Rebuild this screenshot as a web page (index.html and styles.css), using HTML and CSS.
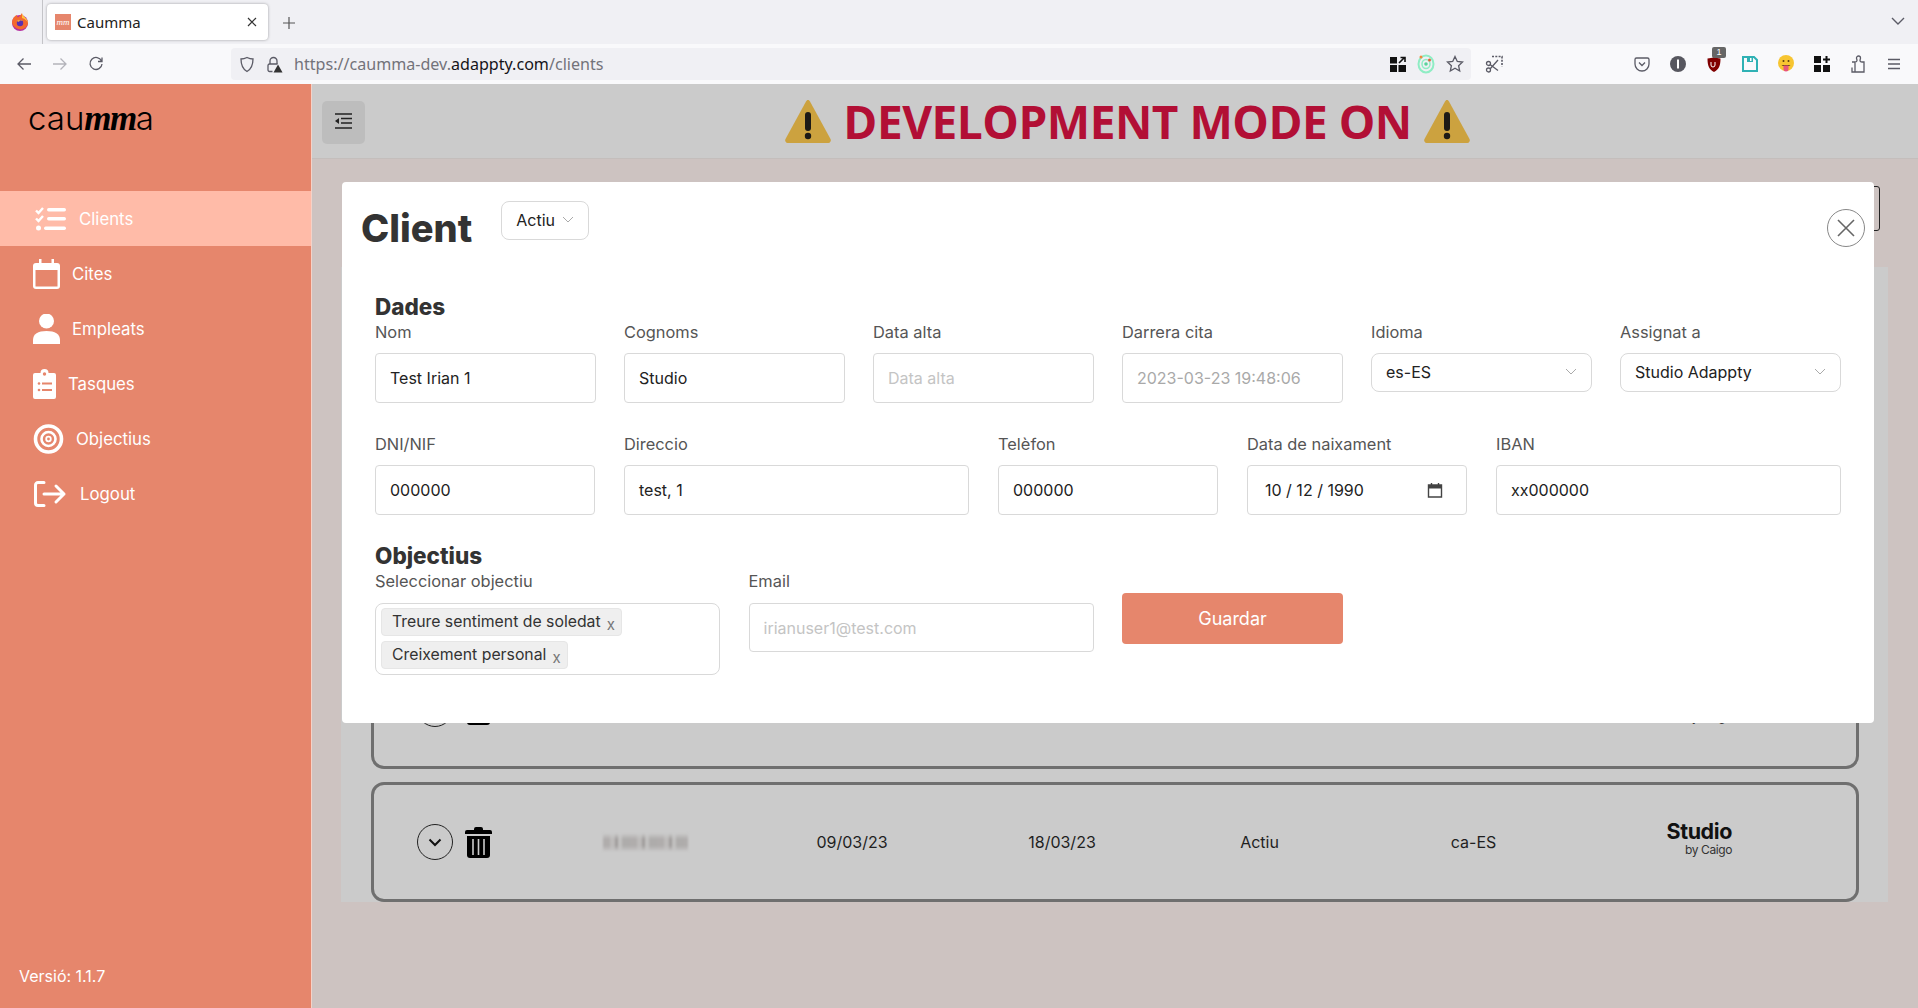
FILE: index.html
```html
<!DOCTYPE html>
<html lang="ca">
	<head>
		<meta charset="utf-8" />
		<title>Caumma</title>
		<link rel="stylesheet" href="styles.css">
	</head>
	<body>
		<!-- browser chrome -->
		<div class="tabbar">
			<div class="ff-slot">
				<svg width="18" height="18" viewBox="0 0 18 18"><circle cx="9" cy="10" r="8" fill="#b52fa0"/><path d="M1 9C1.500 5 4 2.500 6 2c0 1 .5 2 1 2.500C8.500 3.500 10 1.500 11 0c0 2 1 2.500 3 4.500 2 2 3 4 3 5.500 0 3-3 6-7 6.500C5 16 1 13 1 9z" fill="#f4692e"/><path d="M11 0c0 2 1 2.500 3 4.500 2 2 3 4 3 5.500-1-2.500-3-4-6-5z" fill="#ffc63f"/><circle cx="9" cy="10" r="3.200" fill="#5b2fb0"/><path d="M5.500 8c1.500-1.500 5-2 6.500 0-2-1-4-.5-4 1z" fill="#f9a03c"/></svg>
			</div>
			<div class="tab">
				<span class="tab-fav"><span class="tab-fav-mm">mm</span></span>
				<span class="tab-title">Caumma</span>
				<svg class="tab-x" width="10" height="10" viewBox="0 0 10 10"><path d="M1 1l8 8M9 1l-8 8" stroke="#333" stroke-width="1.200" fill="none"/></svg>
			</div>
			<svg class="tab-new" width="14" height="14" viewBox="0 0 14 14"><path d="M7 1v12M1 7h12" stroke="#555" stroke-width="1.200" fill="none"/></svg>
			<svg class="tab-list" width="14" height="10" viewBox="0 0 14 10"><path d="M1 2l6 6 6-6" stroke="#5b5b66" stroke-width="1.400" fill="none"/></svg>
		</div>
		<div class="toolbar">
			<span class="tb-btn"><svg width="16" height="16" viewBox="0 0 16 16"><path d="M15 8H2M7.500 2.500L2 8l5.500 5.500" stroke="#5b5b66" stroke-width="1.300" fill="none"/></svg></span>
			<span class="tb-btn"><svg width="16" height="16" viewBox="0 0 16 16"><path d="M1 8h13M8.500 2.500L14 8l-5.500 5.500" stroke="#b4b4ba" stroke-width="1.300" fill="none"/></svg></span>
			<span class="tb-btn"><svg width="16" height="16" viewBox="0 0 16 16"><path d="M13.500 5A6 6 0 1 0 14 8M14 1.500V5.500h-4" stroke="#5b5b66" stroke-width="1.300" fill="none"/></svg></span>
			<div class="urlbar">
				<svg class="url-shield" width="16" height="17" viewBox="0 0 16 17"><path d="M8 1.500c2 1 4 1.500 6 1.500 0 6-1.500 10-6 12.500C3.500 13 2 9 2 3c2 0 4-.5 6-1.500z" stroke="#5b5b66" stroke-width="1.300" fill="none"/></svg>
				<svg class="url-lock" width="17" height="17" viewBox="0 0 17 17"><path d="M4 8V5a3.500 3.500 0 0 1 7 0v3" stroke="#5b5b66" stroke-width="1.300" fill="none"/><path d="M6.500 15.500H3.500a1.500 1.500 0 0 1-1.500-1.500V9.500A1.500 1.500 0 0 1 3.500 8h8" stroke="#5b5b66" stroke-width="1.300" fill="none"/><path d="M12 8.500l4.500 8h-9z" fill="#333"/></svg>
				<span class="url-text">https://caumma-dev.<b>adappty.com</b>/clients</span>
				<span class="url-end">
					<svg width="16" height="16" viewBox="0 0 16 16"><path d="M0 1h7v6.500H0zM0 9h7v7H0zM8.500 9H16v7H8.500z" fill="#111"/><path d="M9 7l5-5M10.500 1.500H15V6" stroke="#111" stroke-width="1.600" fill="none"/></svg>
					<svg width="18" height="20" viewBox="0 0 18 20"><ellipse cx="9" cy="10" rx="7.500" ry="8.500" fill="none" stroke="#8fedc4" stroke-width="2"/><ellipse cx="9" cy="10" rx="4" ry="4.500" fill="none" stroke="#8fedc4" stroke-width="1.500"/><circle cx="9" cy="10" r="1.800" fill="#5bd39c"/><circle cx="4" cy="3" r="1.500" fill="#f08a3c"/><circle cx="12.500" cy="6" r="1.500" fill="#e2603c"/></svg>
					<svg width="18" height="18" viewBox="0 0 18 18"><path d="M9 1.500l2.300 5 5.200.6-3.900 3.600 1.100 5.300L9 13.300 4.300 16l1.100-5.300L1.500 7.100l5.200-.6z" stroke="#5b5b66" stroke-width="1.300" fill="none"/></svg>
				</span>
			</div>
			<span class="tb-btn tb-shot"><svg width="18" height="18" viewBox="0 0 18 18"><path d="M7 1.500h10v10" stroke="#5b5b66" stroke-width="1.600" stroke-dasharray="2 1.300" fill="none"/><circle cx="3.500" cy="8.500" r="2" stroke="#5b5b66" stroke-width="1.300" fill="none"/><circle cx="3.500" cy="15" r="2" stroke="#5b5b66" stroke-width="1.300" fill="none"/><path d="M5 9.500l8 6M5 14l8-9" stroke="#5b5b66" stroke-width="1.300"/></svg></span>
			<div class="tb-right">
				<span class="tb-btn"><svg width="16" height="16" viewBox="0 0 16 16"><path d="M2.500 2h11A1.500 1.500 0 0 1 15 3.500V8a7 7 0 0 1-14 0V3.500A1.500 1.500 0 0 1 2.500 2z" stroke="#5b5b66" stroke-width="1.300" fill="none"/><path d="M5 6.500l3 3 3-3" stroke="#5b5b66" stroke-width="1.300" fill="none"/></svg></span>
				<span class="tb-btn"><svg width="16" height="16" viewBox="0 0 16 16"><circle cx="8" cy="8" r="8" fill="#57575f"/><rect x="7" y="3.500" width="2" height="9" fill="#fff"/></svg></span>
				<span class="tb-btn ublock"><svg width="14" height="17" viewBox="0 0 14 17"><path d="M7 1c2 1 4 1.300 6.500 1.500 0 7-1.500 11-6.500 13.500C2 13.500.5 9.500.5 2.500 3 2.300 5 2 7 1z" fill="#800000"/><path d="M4 6v3a2 2 0 0 0 4 0V6" stroke="#fff" stroke-width="1" fill="none"/></svg><span class="ublock-badge">1</span></span>
				<span class="tb-btn"><svg width="16" height="16" viewBox="0 0 16 16"><path d="M1 1h11l3 3v11H1z" fill="none" stroke="#2fb1b4" stroke-width="2"/><path d="M5 1h6v5H5z" fill="#2fb1b4"/><path d="M8 2h1.500v3H8z" fill="#fff"/></svg></span>
				<span class="tb-btn"><svg width="16" height="18" viewBox="0 0 16 18"><circle cx="8" cy="8" r="8" fill="#f7c531"/><circle cx="5.500" cy="6" r="1" fill="#5a3d10"/><circle cx="10.500" cy="6" r="1" fill="#5a3d10"/><path d="M3.500 10h9l-1.500 1H5z" fill="#5a3d10"/><path d="M5.500 10.500h5v3.500a2.500 2.500 0 0 1-5 0z" fill="#e8567c"/></svg></span>
				<span class="tb-btn"><svg width="16" height="16" viewBox="0 0 16 16"><path d="M0 0h7v7H0zM0 9h7v7H0zM9 9h7v7H9z" fill="#111"/><path d="M12.500 0v7M9 3.500h7" stroke="#111" stroke-width="2"/></svg></span>
				<span class="tb-btn"><svg width="14" height="18" viewBox="0 0 14 18"><path d="M1 7h3V17M4 7c1 0 2-.5 2-1.500S5.500 4 5.500 3A2 2 0 0 1 9.500 3C9.500 4 9 4.500 9 5.500S10 7 11 7h2v10H1v-4.500" stroke="#5b5b66" stroke-width="1.300" fill="none"/></svg></span>
				<span class="tb-btn"><svg width="14" height="12" viewBox="0 0 14 12"><path d="M1 1.500h12M1 6h12M1 10.500h12" stroke="#5b5b66" stroke-width="1.300" fill="none"/></svg></span>
			</div>
		</div>

		<div class="app">
			<aside class="sidebar">
				<div class="logo">cau<span class="logo-mm">mm</span>a</div>
				<nav class="menu">
					<a class="menu-item active">
						<svg width="34" height="24" viewBox="0 0 34 24" fill="#fff"><path d="M3 3.500l2.500 2.500L10 1M3 11.500l2.500 2.500L10 9" stroke="#fff" stroke-width="2.400" fill="none"/><circle cx="5.500" cy="21" r="2.500"/><rect x="14" y="1" width="19" height="3.500" rx="1.700"/><rect x="14" y="10" width="19" height="3.500" rx="1.700"/><rect x="11" y="19.500" width="22" height="3.500" rx="1.700"/></svg>
						<span>Clients</span>
					</a>
					<a class="menu-item">
						<svg width="27" height="30" viewBox="0 0 27 30"><path d="M3 4h21a3 3 0 0 1 3 3v20a3 3 0 0 1-3 3H3a3 3 0 0 1-3-3V7a3 3 0 0 1 3-3z" fill="#fff"/><rect x="2.500" y="11" width="22" height="16.500" fill="#e6866c"/><rect x="6" y="0" width="2.500" height="5" fill="#fff"/><rect x="18.500" y="0" width="2.500" height="5" fill="#fff"/></svg>
						<span>Cites</span>
					</a>
					<a class="menu-item">
						<svg width="27" height="30" viewBox="0 0 27 30" fill="#fff"><circle cx="13.500" cy="7" r="7.500"/><path d="M0 30v-4c0-6 5-9 13.500-9S27 20 27 26v4z"/></svg>
						<span>Empleats</span>
					</a>
					<a class="menu-item">
						<svg width="23" height="30" viewBox="0 0 23 30"><path d="M2 4h5.500a4 4 0 0 1 8 0H21a2 2 0 0 1 2 2v22a2 2 0 0 1-2 2H2a2 2 0 0 1-2-2V6a2 2 0 0 1 2-2z" fill="#fff"/><circle cx="11.500" cy="5" r="1.700" fill="#e6866c"/><g fill="#e6866c"><circle cx="6" cy="14.500" r="1.300"/><circle cx="6" cy="21" r="1.300"/><rect x="9" y="13.500" width="10" height="2"/><rect x="9" y="20" width="10" height="2"/></g></svg>
						<span>Tasques</span>
					</a>
					<a class="menu-item">
						<svg width="31" height="30" viewBox="0 0 31 30" fill="none" stroke="#fff"><circle cx="15.500" cy="15" r="13" stroke-width="3.600"/><circle cx="15.500" cy="15" r="7" stroke-width="2.600"/><circle cx="15.500" cy="15" r="2.300" stroke-width="1.800"/></svg>
						<span>Objectius</span>
					</a>
					<a class="menu-item">
						<svg width="35" height="26" viewBox="0 0 35 26" fill="none" stroke="#fff" stroke-width="3" stroke-linecap="round" stroke-linejoin="round"><path d="M11 1.500H5a2.500 2.500 0 0 0-2.500 2.500v18A2.500 2.500 0 0 0 5 24.500h6"/><path d="M11 13h20M23 5l8 8-8 8"/></svg>
						<span>Logout</span>
					</a>
				</nav>
				<div class="version">Versió: 1.1.7</div>
			</aside>

			<main class="main">
				<header class="topbar">
					<button class="toggle">
						<svg width="17" height="16" viewBox="0 0 17 16" fill="none" stroke="#222" stroke-width="1.400"><path d="M0 1h17M6 5.500h11M6 10h11M0 15h17"/><path d="M4 5v6L0 8z" fill="#222" stroke="none"/></svg>
					</button>
					<div class="dev-title">
						<svg class="warn" width="46" height="44" viewBox="0 0 46 44"><path d="M23 1c1 0 1.500.6 2 1.500L45.500 40c.7 1.500 0 4-2 4h-41c-2 0-2.700-2.500-2-4L21 2.500c.5-.9 1-1.500 2-1.500z" fill="#cca23f"/><rect x="20" y="13" width="6" height="19" rx="3" fill="#1d1a16"/><circle cx="23" cy="37" r="3.200" fill="#1d1a16"/></svg>
						<span>DEVELOPMENT MODE ON</span>
						<svg class="warn" width="46" height="44" viewBox="0 0 46 44"><path d="M23 1c1 0 1.500.6 2 1.500L45.500 40c.7 1.500 0 4-2 4h-41c-2 0-2.700-2.500-2-4L21 2.500c.5-.9 1-1.500 2-1.500z" fill="#cca23f"/><rect x="20" y="13" width="6" height="19" rx="3" fill="#1d1a16"/><circle cx="23" cy="37" r="3.200" fill="#1d1a16"/></svg>
					</div>
				</header>

				<div class="content">
					<div class="content-head"><span class="new-btn"></span></div>
					<div class="panel">
						<div class="client-row">
							<span class="row-actions">
								<span class="row-open"><svg width="14" height="9" viewBox="0 0 14 9"><path d="M1.500 1.500L7 7l5.500-5.500" stroke="#111" stroke-width="2" fill="none"/></svg></span>
								<svg width="27" height="31" viewBox="0 0 27 31"><use href="#trash"/></svg>
							</span>
							<span class="row-name"><span class="mosaic"></span></span>
							<span>09/03/23</span>
							<span>18/03/23</span>
							<span>Actiu</span>
							<span>ca-ES</span>
							<span class="studio"><b>Studio</b><small>by Caigo</small></span>
						</div>
						<div class="client-row">
							<span class="row-actions">
								<span class="row-open"><svg width="14" height="9" viewBox="0 0 14 9"><path d="M1.500 1.500L7 7l5.500-5.500" stroke="#111" stroke-width="2" fill="none"/></svg></span>
								<svg width="27" height="31" viewBox="0 0 27 31"><g id="trash"><path d="M9 3V2a2 2 0 0 1 2-2h5a2 2 0 0 1 2 2v1h7a2 2 0 0 1 2 2v2H0V5a2 2 0 0 1 2-2z" fill="#000"/><path d="M2 9h23v19a3 3 0 0 1-3 3H5a3 3 0 0 1-3-3z" fill="#000"/><path d="M8 12v16M13.500 12v16M19 12v16" stroke="#cbcbcb" stroke-width="1.600"/></g></svg>
							</span>
							<span class="row-name"><span class="mosaic"></span></span>
							<span>09/03/23</span>
							<span>18/03/23</span>
							<span>Actiu</span>
							<span>ca-ES</span>
							<span class="studio"><b>Studio</b><small>by Caigo</small></span>
						</div>
					</div>
				</div>

				<!-- client modal -->
				<section class="modal">
					<div class="modal-head">
						<h1>Client</h1>
						<div class="select status-select">Actiu <svg class="chev" width="12" height="7" viewBox="0 0 12 7"><path d="M1 1l5 5 5-5" stroke="#aaa" fill="none"/></svg></div>
						<span class="modal-close"><svg width="20" height="20" viewBox="0 0 20 20"><path d="M2 2l16 16M18 2L2 18" stroke="#666" stroke-width="1.600" fill="none"/></svg></span>
					</div>
					<div class="modal-form">
						<h2>Dades</h2>
						<div class="form-row row-six">
							<div class="field"><label>Nom</label><div class="input">Test Irian 1</div></div>
							<div class="field"><label>Cognoms</label><div class="input">Studio</div></div>
							<div class="field"><label>Data alta</label><div class="input empty">Data alta</div></div>
							<div class="field"><label>Darrera cita</label><div class="input muted">2023-03-23 19:48:06</div></div>
							<div class="field"><label>Idioma</label><div class="select">es-ES <svg class="chev" width="12" height="7" viewBox="0 0 12 7"><path d="M1 1l5 5 5-5" stroke="#aaa" fill="none"/></svg></div></div>
							<div class="field"><label>Assignat a</label><div class="select">Studio Adappty <svg class="chev" width="12" height="7" viewBox="0 0 12 7"><path d="M1 1l5 5 5-5" stroke="#aaa" fill="none"/></svg></div></div>
						</div>
						<div class="form-row row-five">
							<div class="field"><label>DNI/NIF</label><div class="input">000000</div></div>
							<div class="field"><label>Direccio</label><div class="input">test, 1</div></div>
							<div class="field"><label>Telèfon</label><div class="input">000000</div></div>
							<div class="field"><label>Data de naixament</label>
								<div class="input date-input"><span>10 / 12 / 1990</span>
									<svg width="16" height="16" viewBox="0 0 16 16"><path d="M1.500 3h13v12h-13z" fill="none" stroke="#444" stroke-width="1.400"/><path d="M1.500 3h13v3.500h-13z" fill="#444"/><path d="M4.500 1v3M11.500 1v3" stroke="#444" stroke-width="1.400"/></svg>
								</div>
							</div>
							<div class="field"><label>IBAN</label><div class="input">xx000000</div></div>
						</div>
						<h2 class="second">Objectius</h2>
						<div class="form-row row-three">
							<div class="field"><label>Seleccionar objectiu</label>
								<div class="tags">
									<span class="tag">Treure sentiment de soledat <i>x</i></span>
									<span class="tag">Creixement personal <i>x</i></span>
								</div>
							</div>
							<div class="field"><label>Email</label><div class="input short empty">irianuser1@test.com</div></div>
							<div class="field"><button class="save">Guardar</button></div>
						</div>
					</div>
				</section>
			</main>
		</div>
	</body>
</html>
```

FILE: styles.css
```css
* {
	box-sizing: border-box;
}
html, body {
	height: 100%;
}
body {
	margin: 0;
	display: flex;
	flex-direction: column;
	overflow: hidden;
	background: #cdc3c1;
	font-family: "Inter", "Liberation Sans", sans-serif;
	color: #222;
}

/* browser chrome */
.tabbar {
	height: 44px;
	flex: none;
	display: flex;
	align-items: flex-start;
	background: #f0f0f4;
}
.ff-slot {
	width: 43px;
	height: 44px;
	padding: 13px 0 0 11px;
	border-right: 1px solid #c4c4c8;
}
.tab {
	width: 221px;
	height: 36px;
	margin: 4px 0 0 4px;
	padding: 0 11px 0 8px;
	display: flex;
	align-items: center;
	background: #fff;
	border-radius: 4px;
	box-shadow: 0 0 3px rgba(0,0,0,0.35);
	font-family: "Noto Sans", sans-serif;
	font-size: 15px;
	color: #222;
}
.tab-fav {
	width: 16px;
	height: 16px;
	margin-right: 6px;
	background: #e6866c;
	display: flex;
	align-items: center;
	justify-content: center;
}
.tab-fav-mm {
	font: italic 9px "Liberation Serif", serif;
	color: #fff;
}
.tab-title {
	flex: 1;
}
.tab-new {
	margin: 16px 0 0 14px;
}
.tab-list {
	margin: 16px 0 0 auto;
	margin-right: 13px;
}
.toolbar {
	height: 40px;
	flex: none;
	display: flex;
	align-items: center;
	padding: 0 6px;
	background: #f9f9fb;
}
.tb-btn {
	width: 36px;
	height: 36px;
	flex: none;
	display: flex;
	align-items: center;
	justify-content: center;
	position: relative;
}
.tb-shot {
	margin-left: 5px;
}
.urlbar {
	width: 1240px;
	height: 32px;
	margin-left: 117px;
	padding: 0 2px 0 8px;
	flex: none;
	display: flex;
	align-items: center;
	background: #f0f0f4;
	border-radius: 4px;
}
.url-lock {
	margin-left: 11px;
}
.url-text {
	margin-left: 11px;
	font-family: "Noto Sans", sans-serif;
	font-size: 16.100px;
	color: #73737a;
}
.url-text b {
	font-weight: normal;
	color: #15141a;
}
.url-end {
	margin-left: auto;
	display: flex;
	align-items: center;
	gap: 11px;
	padding-right: 5px;
}
.tb-right {
	margin-left: auto;
	display: flex;
}
.ublock-badge {
	position: absolute;
	top: 1px;
	left: 16px;
	width: 14px;
	height: 11px;
	background: #666;
	border-radius: 2px;
	color: #fff;
	font: 9px/11px "Liberation Sans", sans-serif;
	text-align: center;
}

/* app frame */
.app {
	flex: 1;
	display: flex;
	min-height: 0;
}
.sidebar {
	width: 312px;
	flex: none;
	display: flex;
	flex-direction: column;
	background: #e6866c;
	border-right: 1px solid #f4d2c8;
	color: #fff;
}
.logo {
	height: 107px;
	padding: 15px 0 0 28px;
	font-family: "Inter", sans-serif;
	font-size: 33px;
	font-weight: 300;
	line-height: 38px;
	color: #000;
}
.logo-mm {
	font-family: "Liberation Serif", serif;
	font-style: italic;
	font-weight: bold;
	font-size: 35px;
	letter-spacing: -1.500px;
}
.menu {
	display: flex;
	flex-direction: column;
}
.menu-item {
	height: 55px;
	padding-left: 33px;
	display: flex;
	align-items: center;
	gap: 12px;
	font-size: 16.800px;
	color: #fff;
}
.menu-item.active {
	background: #ffbba8;
}
.version {
	margin-top: auto;
	padding: 0 0 22px 19px;
	font-size: 16px;
}

.main {
	flex: 1;
	position: relative;
	display: flex;
	flex-direction: column;
	min-width: 0;
}
.topbar {
	height: 75px;
	flex: none;
	display: flex;
	align-items: center;
	padding: 3px 28px 0 10px;
	background: #cbcbcb;
	border-bottom: 1px solid #c4bebc;
}
.toggle {
	width: 43px;
	height: 43px;
	padding: 0;
	border: 0;
	border-radius: 5px;
	background: #bdbdbd;
}
.dev-title {
	flex: 1;
	margin-top: -3px;
	display: flex;
	align-items: center;
	justify-content: center;
	gap: 12px;
	font-family: "Open Sans", sans-serif;
	font-size: 46px;
	font-weight: 700;
	letter-spacing: -0.500px;
	color: #b20f35;
}

.content {
	flex: 1;
	padding: 27px 30px 0 29px;
	background: #cdc3c1;
}
.content-head {
	height: 45px;
	margin-bottom: 36px;
	padding-right: 8px;
	display: flex;
	justify-content: flex-end;
}
.new-btn {
	width: 60px;
	height: 45px;
	border: 1px solid #222;
	border-radius: 3px;
}
.panel {
	height: 635px;
	padding: 0 29px 0 30px;
	display: flex;
	flex-direction: column;
	justify-content: flex-end;
	gap: 13px;
	background: #cbcbcb;
}
.client-row {
	height: 120px;
	flex: none;
	padding-left: 44px;
	display: grid;
	grid-template-columns: 124px 206px 208px 212px 183px 245px 205px;
	align-items: center;
	text-align: center;
	border: 3px solid #6f6f6f;
	border-radius: 13px;
	font-size: 16px;
	color: #1f1f1f;
}
.row-actions {
	display: flex;
	align-items: center;
	gap: 12px;
	margin-left: -1px;
}
.row-open {
	width: 36px;
	height: 36px;
	display: flex;
	align-items: center;
	justify-content: center;
	border: 1px solid #222;
	border-radius: 50%;
}
.row-name {
	display: flex;
	justify-content: center;
}
.mosaic {
	width: 85px;
	height: 18px;
	background:
		linear-gradient(180deg, #cbcbcb 0, rgba(203,203,203,0) 35%, rgba(203,203,203,0) 70%, #c6c5c5 100%),
		repeating-linear-gradient(90deg, #b0adac 0 7px, #bdbbba 7px 12px, #a09d9c 12px 15px, #c2c1c0 15px 19px, #aeacab 19px 27px);
	filter: blur(1px);
}
.studio {
	display: flex;
	flex-direction: column;
	align-items: flex-end;
	width: 67px;
	margin-top: -7px;
	justify-self: center;
	line-height: 1;
}
.studio b {
	font-size: 21.500px;
	letter-spacing: -0.400px;
	color: #111;
}
.studio small {
	margin-top: 2px;
	font-size: 12px;
	letter-spacing: -0.400px;
	color: #333;
}

/* modal */
.modal {
	position: absolute;
	left: 30px;
	top: 98px;
	width: 1532px;
	padding-bottom: 48px;
	background: #fff;
	border-radius: 4px;
}
.modal-head {
	height: 112px;
	padding: 19px 9px 0 19px;
	display: flex;
	align-items: flex-start;
}
.modal-head h1 {
	margin: 4px 29px 0 0;
	font-size: 38px;
	line-height: 46px;
	font-weight: 800;
	color: #333;
}
.modal-close {
	width: 38px;
	height: 38px;
	margin: 8px 0 0 auto;
	display: flex;
	align-items: center;
	justify-content: center;
	border: 1px solid #888;
	border-radius: 50%;
}
.modal-form {
	padding: 0 33px;
}
.modal-form h2 {
	margin: 0;
	font-size: 22.500px;
	line-height: 26px;
	font-weight: 800;
	color: #333;
}
.modal-form h2.second {
	margin-top: 28px;
}
.form-row {
	display: grid;
	column-gap: 28px;
	align-items: start;
}
.row-six {
	grid-template-columns: repeat(6, 221px);
}
.row-five {
	margin-top: 29px;
	column-gap: 29px;
	grid-template-columns: 220px 345px 220px 220px 345px;
}
.row-three {
	column-gap: 28.500px;
	grid-template-columns: 345px 345px 221px;
}
.field label {
	display: block;
	height: 24px;
	margin-bottom: 9px;
	font-size: 16.400px;
	line-height: 24px;
	color: #555;
}
.row-three .field label {
	margin-bottom: 10px;
}
.input {
	height: 50px;
	padding: 0 14px;
	display: flex;
	align-items: center;
	border: 1px solid #d9d9d9;
	border-radius: 4px;
	font-size: 16px;
	color: #222;
}
.input.short {
	height: 49px;
}
.input.muted {
	color: #a9a9a9;
}
.input.empty {
	color: #c4c4c4;
}
.date-input {
	justify-content: space-between;
	padding: 0 23px 0 17px;
}
.select {
	height: 39px;
	padding: 0 14px 2px;
	display: flex;
	align-items: center;
	justify-content: space-between;
	border: 1px solid #d9d9d9;
	border-radius: 8px;
	font-size: 16px;
	color: #222;
}
.status-select {
	width: 88px;
}
.chev {
	flex: none;
}
.tags {
	height: 72px;
	padding: 4px 5px;
	display: flex;
	flex-wrap: wrap;
	align-content: flex-start;
	gap: 5px 60px;
	border: 1px solid #d9d9d9;
	border-radius: 8px;
}
.tag {
	height: 28px;
	padding: 0 6px 2px 10px;
	display: flex;
	align-items: center;
	gap: 6px;
	background: #efefef;
	border: 1px solid #e6e6e6;
	border-radius: 4px;
	font-size: 15.800px;
	white-space: nowrap;
	color: #333;
}
.tag i {
	font-style: normal;
	font-size: 15px;
	line-height: 12px;
	margin-top: 8px;
	color: #777;
}
.save {
	width: 221px;
	height: 51px;
	margin-top: 24px;
	border: 0;
	border-radius: 4px;
	background: #e6866c;
	color: #fff;
	font-family: inherit;
	font-size: 18px;
}
```
